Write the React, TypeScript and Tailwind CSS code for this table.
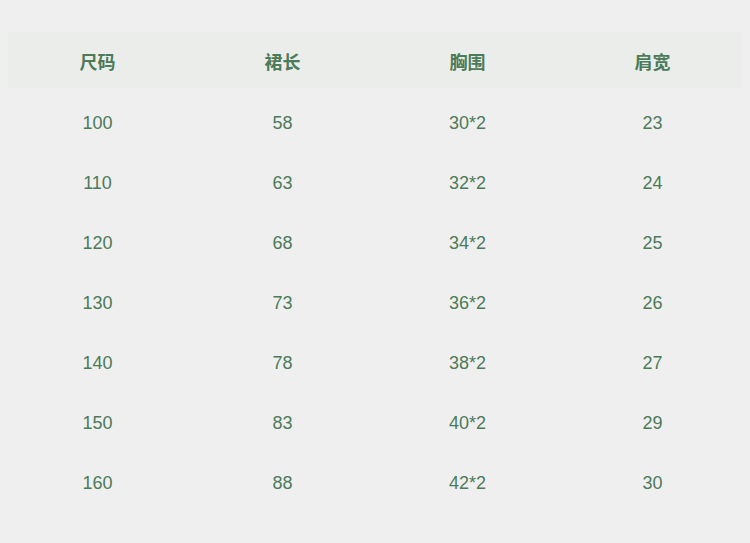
const rows = [
  ['100', '58', '30*2', '23'],
  ['110', '63', '32*2', '24'],
  ['120', '68', '34*2', '25'],
  ['130', '73', '36*2', '26'],
  ['140', '78', '38*2', '27'],
  ['150', '83', '40*2', '29'],
  ['160', '88', '42*2', '30'],
]

const headers = ['尺码', '裙长', '胸围', '肩宽']

export default function App() {
  return (
    <div
      className="h-[543px] w-[750px] bg-[#efefef] pt-[32px] text-[#4b7b58]"
      style={{ fontFamily: '"Liberation Sans", "Noto Sans CJK SC", sans-serif' }}
    >
      {/* Header */}
      <div className="mx-[8px] h-[56px] bg-[#ebedea]">
        <div className="mx-[-3px] grid h-full grid-cols-4 items-center pt-[7px] text-center text-[18px] font-bold">
          {headers.map((h) => (
            <div key={h}>{h}</div>
          ))}
        </div>
      </div>

      {/* Rows */}
      <div className="mt-[5px] px-[5px]">
        {rows.map((r) => (
          <div key={r[0]} className="grid h-[60px] grid-cols-4 items-center text-center text-[18px]">
            {r.map((c, i) => (
              <div key={i}>{c}</div>
            ))}
          </div>
        ))}
      </div>
    </div>
  )
}
